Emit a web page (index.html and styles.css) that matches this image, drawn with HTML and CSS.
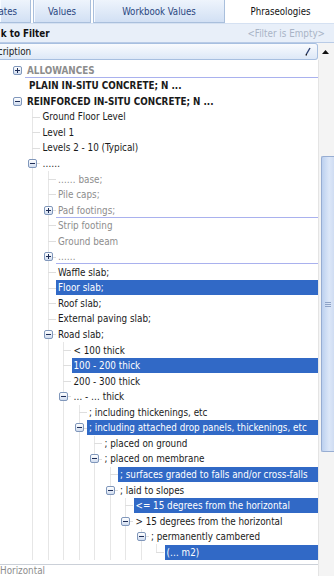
FILE: index.html
```html
<!DOCTYPE html>
<html>
<head>
<meta charset="utf-8">
<link rel="stylesheet" href="styles.css">
</head>
<body>
<div class="tabs">
  <div class="tab t1"><span>Estimates</span></div>
  <div class="tab t2">Values</div>
  <div class="tab t3">Workbook Values</div>
  <div class="tab t4 active">Phraseologies</div>
</div>
<div class="filter">
  <span class="clip"><span class="hide">Clic</span>k to Filter</span>
  <span class="empty">&lt;Filter is Empty&gt;</span>
</div>
<div class="main">
  <div class="left">
    <div class="header">
      <span class="clip"><span class="hide">Des</span>cription</span>
      <svg class="pencil" width="6" height="9" viewBox="0 0 6 9"><path d="M5 1 L1.5 7" stroke="#2b3f70" stroke-width="1.4" fill="none"/><path d="M1.5 7 L1 8.5" stroke="#000" stroke-width="1.2"/></svg>
    </div>
    <div class="tree-wrap">
      <ul class="tree">
        <li><div class="row"><span class="gut"><span class="exp plus"></span></span><span class="txt b gray mark">ALLOWANCES</span></div></li>
        <li><div class="row"><span class="gut"></span><span class="txt b indent">PLAIN IN-SITU CONCRETE; N ...</span></div></li>
        <li><div class="row"><span class="gut"><span class="exp"></span></span><span class="txt b">REINFORCED IN-SITU CONCRETE; N ...</span></div>
          <ul>
            <li><div class="row"><span class="gut"></span><span class="txt">Ground Floor Level</span></div></li>
            <li><div class="row"><span class="gut"></span><span class="txt">Level 1</span></div></li>
            <li><div class="row"><span class="gut"></span><span class="txt">Levels 2 - 10 (Typical)</span></div></li>
            <li><div class="row"><span class="gut"><span class="exp"></span></span><span class="txt">……</span></div>
              <ul>
                <li><div class="row"><span class="gut"></span><span class="txt gray">…… base;</span></div></li>
                <li><div class="row"><span class="gut"></span><span class="txt gray">Pile caps;</span></div></li>
                <li><div class="row"><span class="gut"><span class="exp plus"></span></span><span class="txt gray mark">Pad footings;</span></div></li>
                <li><div class="row"><span class="gut"></span><span class="txt gray">Strip footing</span></div></li>
                <li><div class="row"><span class="gut"></span><span class="txt gray">Ground beam</span></div></li>
                <li><div class="row"><span class="gut"><span class="exp plus"></span></span><span class="txt gray mark">……</span></div></li>
                <li><div class="row"><span class="gut"></span><span class="txt">Waffle slab;</span></div></li>
                <li class="sel"><div class="row"><span class="gut"></span><span class="txt">Floor slab;</span></div></li>
                <li><div class="row"><span class="gut"></span><span class="txt">Roof slab;</span></div></li>
                <li><div class="row"><span class="gut"></span><span class="txt">External paving slab;</span></div></li>
                <li><div class="row"><span class="gut"><span class="exp"></span></span><span class="txt">Road slab;</span></div>
                  <ul>
                    <li><div class="row"><span class="gut"></span><span class="txt">&lt; 100 thick</span></div></li>
                    <li class="sel"><div class="row"><span class="gut"></span><span class="txt">100 - 200 thick</span></div></li>
                    <li><div class="row"><span class="gut"></span><span class="txt">200 - 300 thick</span></div></li>
                    <li><div class="row"><span class="gut"><span class="exp"></span></span><span class="txt">… - … thick</span></div>
                      <ul>
                        <li><div class="row"><span class="gut"></span><span class="txt">; including thickenings, etc</span></div></li>
                        <li class="sel"><div class="row"><span class="gut"><span class="exp"></span></span><span class="txt">; including attached drop panels, thickenings, etc</span></div>
                          <ul>
                            <li><div class="row"><span class="gut"></span><span class="txt">; placed on ground</span></div></li>
                            <li><div class="row"><span class="gut"><span class="exp"></span></span><span class="txt">; placed on membrane</span></div>
                              <ul>
                                <li class="sel"><div class="row"><span class="gut"></span><span class="txt">; surfaces graded to falls and/or cross-falls</span></div></li>
                                <li><div class="row"><span class="gut"><span class="exp"></span></span><span class="txt">; laid to slopes</span></div>
                                  <ul>
                                    <li class="sel"><div class="row"><span class="gut"></span><span class="txt">&lt;= 15 degrees from the horizontal</span></div></li>
                                    <li><div class="row"><span class="gut"><span class="exp"></span></span><span class="txt">&gt; 15 degrees from the horizontal</span></div>
                                      <ul>
                                        <li><div class="row"><span class="gut"><span class="exp"></span></span><span class="txt">; permanently cambered</span></div>
                                          <ul>
                                            <li class="sel last"><div class="row"><span class="gut"></span><span class="txt">(… m2)</span></div></li>
                                          </ul>
                                        </li>
                                      </ul>
                                    </li>
                                  </ul>
                                </li>
                              </ul>
                            </li>
                          </ul>
                        </li>
                      </ul>
                    </li>
                  </ul>
                </li>
              </ul>
            </li>
          </ul>
        </li>
      </ul>
    </div>
    <div class="bottom">Horizontal</div>
  </div>
  <div class="scroll">
    <div class="up"><svg width="7" height="4" viewBox="0 0 7 4"><path d="M0 4 L3.5 0 L7 4 Z" fill="#111"/></svg></div>
    <div class="track">
      <div class="thumb"><span class="grip"></span></div>
    </div>
  </div>
</div>
</body>
</html>
```
FILE: styles.css
```css
* { box-sizing: border-box; margin: 0; padding: 0; }
body {
  width: 334px; height: 576px; overflow: hidden;
  font-family: "DejaVu Sans Condensed", "DejaVu Sans", sans-serif;
  font-size: 9.8px; color: #1a1a1a; background: #fff;
}
.tabs { display: flex; gap: 2px; height: 23px; background: #fff; font-size: 9.6px; }
.tab {
  display: flex; align-items: center; justify-content: center;
  overflow: hidden; white-space: nowrap; color: #2a4680;
  background: linear-gradient(#eef4fc, #d2e0f4);
  border: 1px solid #a9bfdc; border-top: none;
  box-shadow: inset 1px 0 0 #f7faff;
}
.t1 { width: 31px; justify-content: flex-end; padding-right: 13px; border-left: none; }
.t2 { width: 58px; }
.t3 { width: 132px; }
.t4 { flex: 1; }
.tab.active { background: #fff; color: #111; border: none; box-shadow: none; }
.filter {
  height: 20px; display: flex; align-items: center; justify-content: space-between;
  padding-right: 9px; background: #e8eff9; border-bottom: 1px solid #b9cbe6;
  border-top: 1px solid #d5e1f2;
}
.clip { display: inline-flex; white-space: nowrap; overflow: hidden; }
.hide { visibility: hidden; }
.filter .clip { font-weight: bold; color: #111; }
.filter .clip .hide { margin-left: -17px; }
.empty { color: #a9b4c6; }
.main { display: flex; height: 533px; }
.left { width: 318px; display: flex; flex-direction: column; }
.header {
  height: 17px; display: flex; align-items: center; justify-content: space-between;
  padding-right: 6px;
  background: linear-gradient(#f9fbfe, #dde8f7);
  border: 1px solid #a7bfe0; border-left: none; border-radius: 0 3px 3px 0;
}
.header .clip .hide { margin-left: -19px; }
.pencil { display: block; }
.tree-wrap { height: 505px; overflow: hidden; padding-top: 2.5px; }
ul { list-style: none; }
.tree { padding-left: 11.5px; }
.tree ul { padding-left: 15.5px; }
li { position: relative; }
li::before {
  content: ''; position: absolute; left: 5px; top: 0; bottom: 0;
  border-left: 1px solid #e6e6e6;
}
li::after {
  content: ''; position: absolute; left: 5px; top: 7.5px; width: 8px;
  border-top: 1px solid #dedede;
}
li.last::before { bottom: auto; height: 8px; }
.tree > li::before, .tree > li::after { display: none; }
.row { display: flex; align-items: center; height: 15.55px; }
.gut { width: 13.5px; flex: none; display: flex; align-items: center; }
.exp {
  position: relative; z-index: 1; width: 9px; height: 9px; margin-left: 1px;
  border: 1px solid #8097bb; border-radius: 2px;
  background: linear-gradient(#ffffff, #d0dcef);
}
.exp::before {
  content: ''; position: absolute; left: 1px; top: 3px; width: 5px; height: 1px; background: #1d2d57;
}
.exp.plus::after {
  content: ''; position: absolute; left: 3px; top: 1px; width: 1px; height: 5px; background: #1d2d57;
}
.txt { flex: 1; height: 15px; line-height: 15px; padding-left: 2px; white-space: nowrap; overflow: hidden; }
.txt.b { font-weight: bold; }
.txt.indent { padding-left: 4px; }
.gray { color: #8d8d8d; }
.mark { border-bottom: 1px solid #a9b1ee; }
li.sel > .row > .txt { background: #3169c6; color: #fff; }
.bottom {
  flex: 1; border-top: 1px solid #cbd0d8; color: #8d8d8d; line-height: 11px;
}
.scroll { width: 16px; display: flex; flex-direction: column; }
.up { height: 17px; display: flex; align-items: center; justify-content: center; padding-right: 1px; background: #f4f4f4; }
.track { flex: 1; background: #f4f4f4; border-left: 1px solid #e4e4e4; padding-left: 2px; }
.thumb {
  margin-top: 96px; height: 296px;
  background: linear-gradient(90deg, #bcd0ef, #dce7f8 60%, #cfdcf2);
  border: 1px solid #97add2; border-right: none; border-radius: 2px 0 0 2px;
  display: flex; align-items: center; justify-content: center;
}
.grip { width: 6px; height: 5px; border-top: 1px solid #8ea3c7; border-bottom: 1px solid #8ea3c7; position: relative; }
.grip::after { content: ''; position: absolute; left: 0; right: 0; top: 1px; border-top: 1px solid #8ea3c7; }
```
